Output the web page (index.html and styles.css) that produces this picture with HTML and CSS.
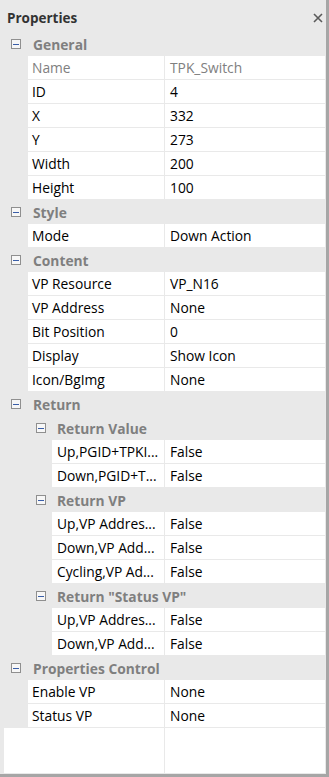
FILE: index.html
```html
<!DOCTYPE html>
<html lang="en">
<head>
    <meta charset="UTF-8">
    <meta name="viewport" content="width=device-width, initial-scale=1.0">
    <title>Properties</title>
    <link rel="stylesheet" href="styles.css">
</head>
<body>
    <div class="panel">
        <div class="panel-header">
            <span class="panel-title">Properties</span>
            <svg class="close" width="10" height="10" viewBox="0 0 10 10">
                <path d="M1 1 L9 9 M9 1 L1 9" stroke="#5a5a5a" stroke-width="1.6" fill="none"/>
            </svg>
        </div>

        <div class="grid">
            <div class="cat"><span class="toggle"></span>General</div>
            <div class="prop"><div class="name readonly">Name</div><div class="value readonly">TPK_Switch</div></div>
            <div class="prop"><div class="name">ID</div><div class="value">4</div></div>
            <div class="prop"><div class="name">X</div><div class="value">332</div></div>
            <div class="prop"><div class="name">Y</div><div class="value">273</div></div>
            <div class="prop"><div class="name">Width</div><div class="value">200</div></div>
            <div class="prop"><div class="name">Height</div><div class="value">100</div></div>

            <div class="cat"><span class="toggle"></span>Style</div>
            <div class="prop"><div class="name">Mode</div><div class="value">Down Action</div></div>

            <div class="cat"><span class="toggle"></span>Content</div>
            <div class="prop"><div class="name">VP Resource</div><div class="value">VP_N16</div></div>
            <div class="prop"><div class="name">VP Address</div><div class="value">None</div></div>
            <div class="prop"><div class="name">Bit Position</div><div class="value">0</div></div>
            <div class="prop"><div class="name">Display</div><div class="value">Show Icon</div></div>
            <div class="prop"><div class="name">Icon/BgImg</div><div class="value">None</div></div>

            <div class="cat"><span class="toggle"></span>Return</div>
            <div class="cat sub"><span class="toggle"></span>Return Value</div>
            <div class="prop sub"><div class="name">Up,PGID+TPKI...</div><div class="value">False</div></div>
            <div class="prop sub"><div class="name">Down,PGID+T...</div><div class="value">False</div></div>
            <div class="cat sub"><span class="toggle"></span>Return VP</div>
            <div class="prop sub"><div class="name">Up,VP Addres...</div><div class="value">False</div></div>
            <div class="prop sub"><div class="name">Down,VP Add...</div><div class="value">False</div></div>
            <div class="prop sub"><div class="name">Cycling,VP Ad...</div><div class="value">False</div></div>
            <div class="cat sub"><span class="toggle"></span>Return "Status VP"</div>
            <div class="prop sub"><div class="name">Up,VP Addres...</div><div class="value">False</div></div>
            <div class="prop sub"><div class="name">Down,VP Add...</div><div class="value">False</div></div>

            <div class="cat"><span class="toggle"></span>Properties Control</div>
            <div class="prop"><div class="name">Enable VP</div><div class="value">None</div></div>
            <div class="prop"><div class="name">Status VP</div><div class="value">None</div></div>

            <div class="filler"><div class="filler-name"></div><div class="filler-value"></div></div>
        </div>
    </div>
</body>
</html>
```

FILE: styles.css
```css
/* Panel de propiedades */
body {
    margin: 0;
    font-family: "Open Sans", "Noto Sans", sans-serif;
    font-size: 13.8px;
    color: #000;
    background: #fff;
}

.panel {
    width: 329px;
    height: 777px;
    box-sizing: border-box;
    display: flex;
    flex-direction: column;
    background: #e9e9e9;
    border-right: 3px solid #a6a6a6;
    border-bottom: 3px solid #a6a6a6;
    padding: 0 1px 1px 4px;
}

.panel-header {
    height: 32px;
    box-sizing: border-box;
    flex: none;
    display: flex;
    align-items: center;
    justify-content: space-between;
    padding: 4px 2px 0 3px;
}

.panel-title {
    font-weight: bold;
    font-size: 13.5px;
    color: #333;
}

.grid {
    flex: 1;
    display: flex;
    flex-direction: column;
    background: #fff;
}

.cat {
    height: 24px;
    flex: none;
    display: flex;
    align-items: center;
    padding-left: 7px;
    background: #e9e9e9;
    color: #7f7f7f;
    font-weight: bold;
}

.cat.sub {
    padding-left: 32px;
}

.toggle {
    width: 8px;
    height: 8px;
    border: 1px solid #8f8f8f;
    background: #f7f7f7 linear-gradient(#3a5ea8, #3a5ea8) no-repeat center / 6px 1px;
    margin-right: 12px;
    flex: none;
}

.cat.sub .toggle {
    margin-right: 11px;
}

.prop {
    height: 24px;
    flex: none;
    display: flex;
    box-sizing: border-box;
    border-bottom: 1px solid #e9e9e9;
    padding-left: 24px;
    background: #e9e9e9;
}

.prop.sub {
    padding-left: 48px;
}

.name, .value {
    background: #fff;
    display: flex;
    align-items: center;
    white-space: nowrap;
    overflow: hidden;
}

.name {
    flex: 1;
    padding-left: 4px;
    border-right: 1px solid #e9e9e9;
}

.prop.sub .name {
    padding-left: 5px;
}

.value {
    width: 160px;
    flex: none;
    padding-left: 5px;
    box-sizing: border-box;
}

.readonly {
    color: #808080;
}

.filler {
    flex: 1;
    display: flex;
}

.filler-name {
    flex: 1;
    border-right: 1px solid #e9e9e9;
}

.filler-value {
    width: 160px;
}
```
